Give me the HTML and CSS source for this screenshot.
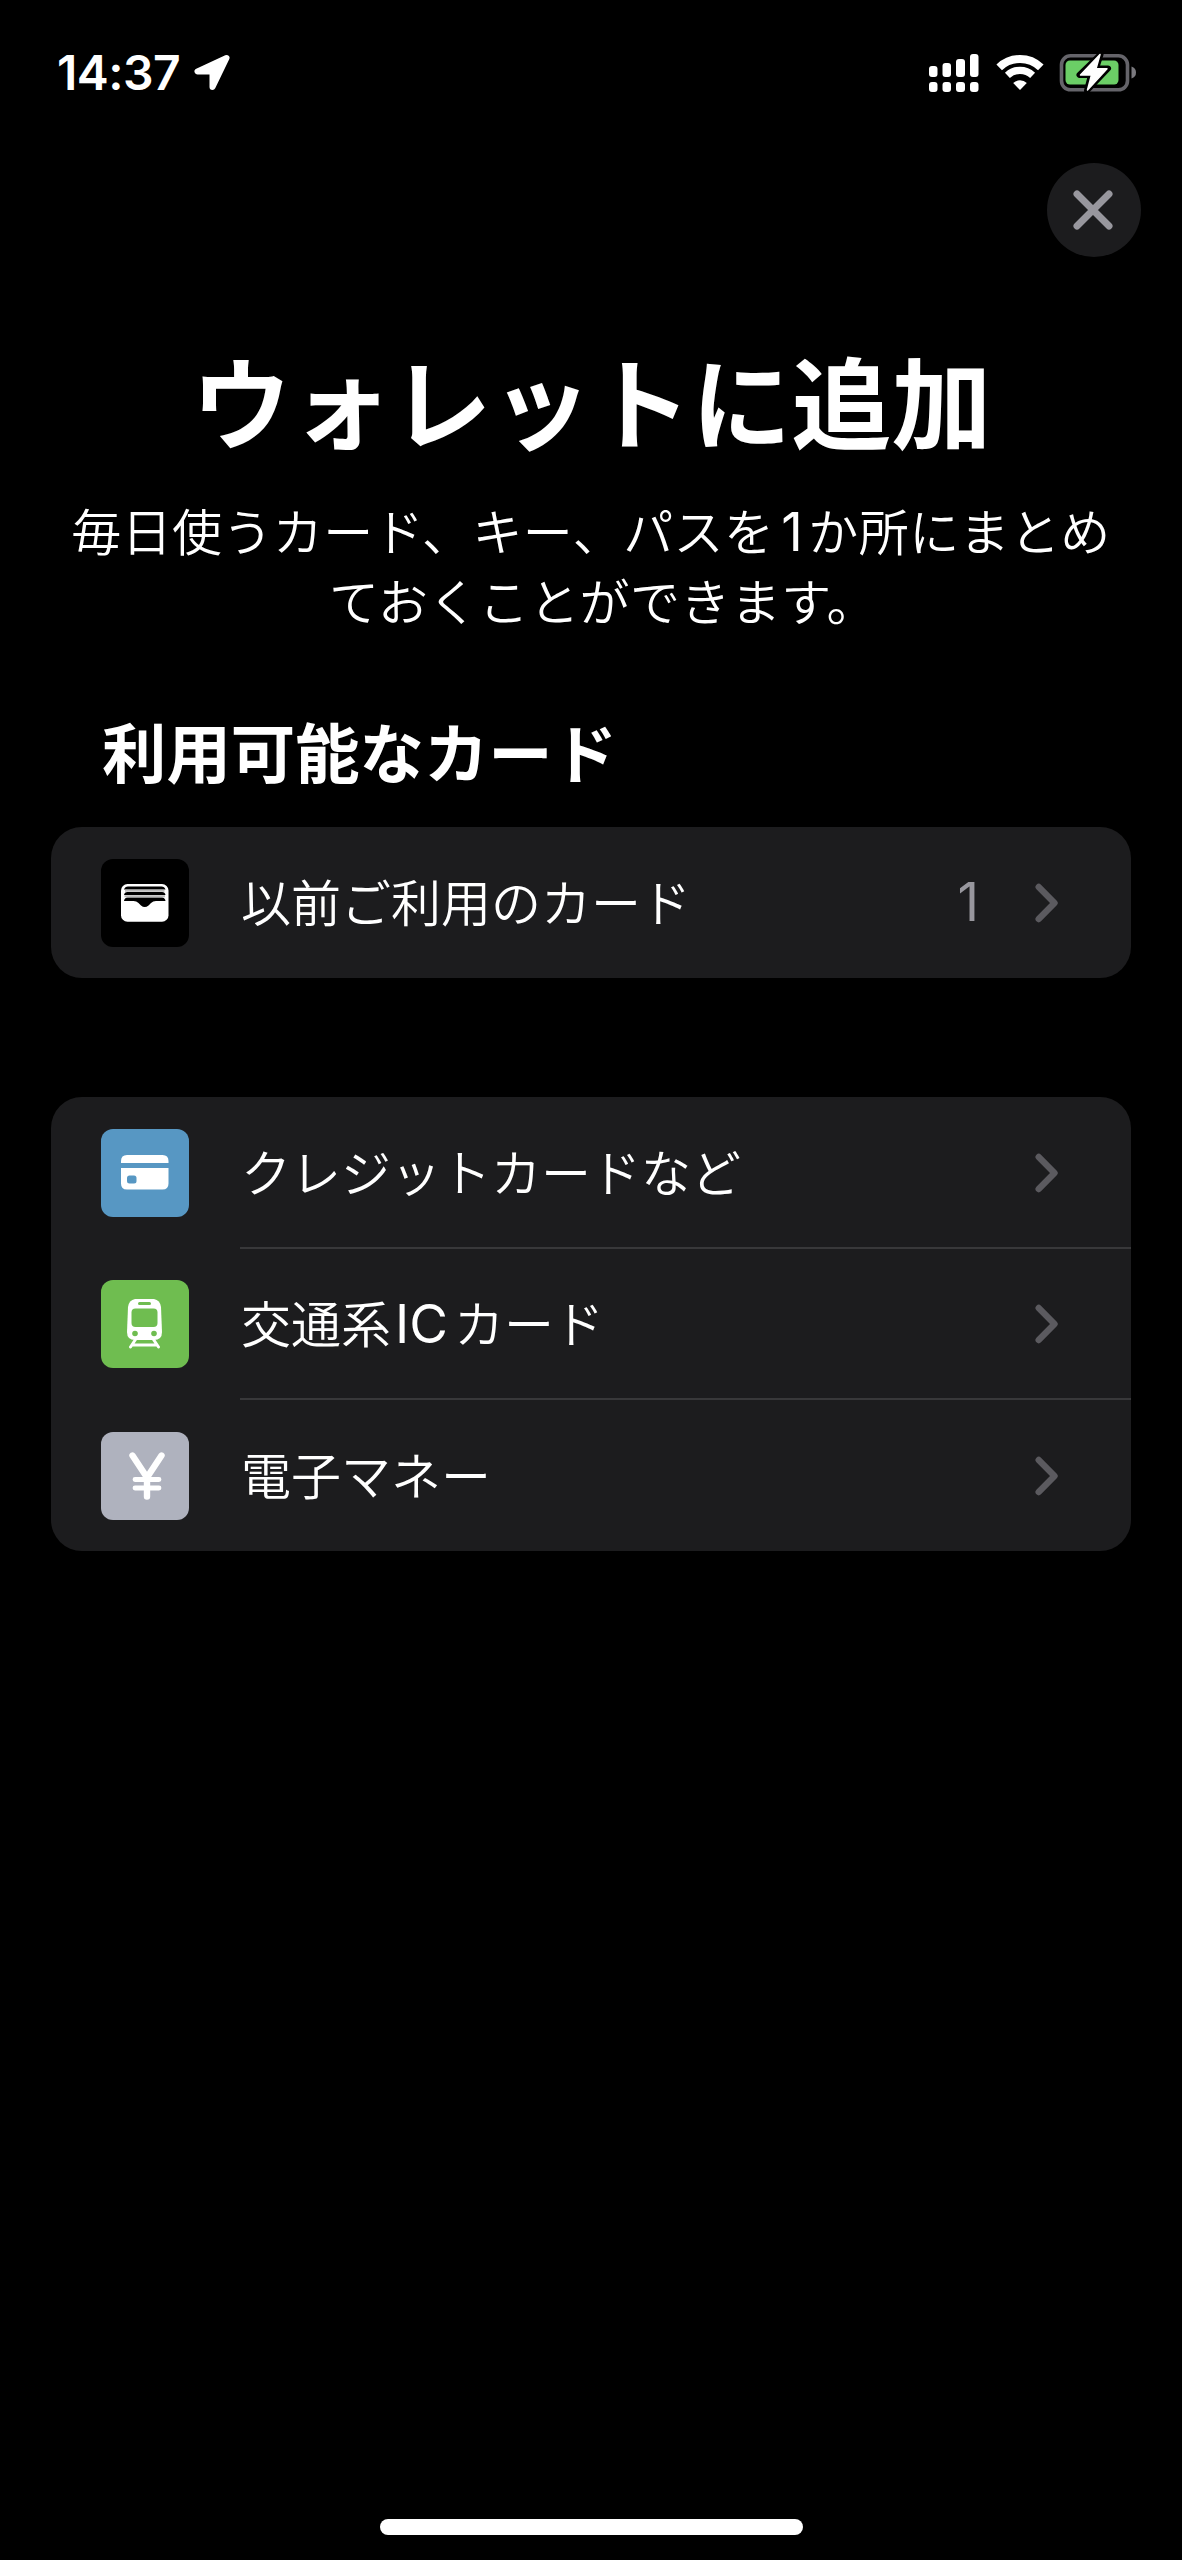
FILE: index.html
```html
<!DOCTYPE html>
<html lang="ja">
<head>
<meta charset="utf-8">
<title>ウォレットに追加</title>
<link rel="stylesheet" href="styles.css">
</head>
<body>
<div class="screen">
  <header class="status">
    <div class="status-left">
      <span class="time">14:37</span>
      <svg class="location" width="38" height="38" viewBox="0 0 38 38"><path d="M33.500 4 L4.500 17.500 H19.500 V33 Z" fill="#fff" stroke="#fff" stroke-width="6" stroke-linejoin="round"/></svg>
    </div>
    <div class="status-right">
      <svg width="52" height="40" viewBox="0 0 52 40" fill="#fff"><rect x="1" y="13" width="8.500" height="11" rx="3"/><rect x="14.500" y="10" width="8.500" height="14" rx="3"/><rect x="28" y="6" width="9" height="18" rx="3"/><rect x="42" y="1" width="8.500" height="23" rx="3"/><rect x="1" y="29" width="8.500" height="10" rx="3"/><rect x="14.500" y="29" width="8.500" height="10" rx="3"/><rect x="28" y="29" width="9" height="10" rx="3"/><rect x="42" y="29" width="8.500" height="10" rx="3"/></svg>
      <svg class="wifi" width="48" height="40" viewBox="0 0 48 40" fill="none" stroke="#fff"><path d="M3.200 14.300 A30 30 0 0 1 44.800 14.300" stroke-width="8"/><path d="M11.400 22.300 A18.500 18.500 0 0 1 36.600 22.300" stroke-width="7.200"/><path d="M24 37 L17.200 30 A10 10 0 0 1 30.800 30 Z" fill="#fff" stroke="none"/></svg>
      <svg width="80" height="40" viewBox="0 0 80 40"><rect x="2.500" y="2.800" width="66" height="34" rx="9" fill="none" stroke="#65646a" stroke-width="3.600"/><rect x="6.500" y="7.500" width="53" height="24" rx="4.500" fill="#6bce66"/><path d="M72.500 13.500 Q77 15 77 19.500 T72.500 25.500 Z" fill="#7a797e"/><path d="M41.500 1.500 L20.500 22 H32 L28 37.500 L49 15.500 H37 Z" fill="#fff" stroke="#000" stroke-width="6" stroke-linejoin="round"/><path d="M41 1.500 L21.500 22 H32.500 L28.500 37 L48 15.800 H37 Z" fill="#fff" stroke="#fff" stroke-width="1.500" stroke-linejoin="round"/></svg>
    </div>
  </header>

  <nav class="toolbar">
    <button class="close" aria-label="閉じる"><svg width="40" height="40" viewBox="0 0 40 40"><path d="M4 4 L36 36 M36 4 L4 36" stroke="#98979e" stroke-width="7" stroke-linecap="round"/></svg></button>
  </nav>

  <main>
    <h1 class="title">ウォレットに追加</h1>
    <p class="lead">毎日使うカード、キー、パスを<span class="num">1</span>か所にまとめ<br>ておくことができます<span class="stop">。</span></p>
    <h2 class="heading">利用可能なカード</h2>

    <section class="group">
      <div class="row">
        <span class="tile black"><svg width="48" height="38" viewBox="0 0 48 38"><rect width="47.500" height="37.700" rx="6.500" fill="#fff"/><path d="M3 5.600 Q4 2.500 7 2.500 H40.500 Q43.500 2.500 44.500 5.600 Z M3 11 Q3.500 8 6.500 8 H41 Q44 8 44.500 11 Z M3 17 Q3.500 13.500 6.500 13.500 H41 Q44 13.500 44.500 17 H35 Q32 17 30 19 L27.500 21.500 Q23.700 24.500 20 21.500 L17.500 19 Q15.500 17 12.500 17 Z" fill="#000"/><path d="M4 6.700 H43.500 M3.500 12.200 H44" stroke="#bbb" stroke-width="2"/></svg></span>
        <span class="label">以前ご利用のカード</span>
        <span class="count">1</span>
        <svg class="chevron" width="24" height="40" viewBox="0 0 24 40"><path d="M3.700 4 L19.500 20 L3.700 36"/></svg>
      </div>
    </section>

    <section class="group second">
      <div class="row">
        <span class="tile blue"><svg width="48" height="35" viewBox="0 0 48 35"><path d="M0 8 V6 Q0 0 6 0 H41.500 Q47.500 0 47.500 6 V8 Z M0 13 H47.500 V28.500 Q47.500 34.500 41.500 34.500 H6 Q0 34.500 0 28.500 Z" fill="#fff"/><rect x="6" y="20.500" width="9.500" height="8" rx="2.500" fill="#5797c3"/></svg></span>
        <span class="label">クレジットカードなど</span>
        <svg class="chevron" width="24" height="40" viewBox="0 0 24 40"><path d="M3.700 4 L19.500 20 L3.700 36"/></svg>
      </div>
      <div class="row">
        <span class="tile green"><svg width="36" height="50" viewBox="0 0 36 50"><path d="M8 0 H27 Q33 1 34 8 L35 33 Q35 41 27 41 H8 Q0 41 0 33 L1 8 Q2 1 8 0 Z" fill="#fff"/><rect x="11" y="3" width="13" height="3" rx="1.500" fill="#6fbd50"/><rect x="4.500" y="9.500" width="26" height="18.500" rx="4" fill="#6fbd50"/><circle cx="8" cy="34.500" r="2.800" fill="#6fbd50"/><circle cx="27" cy="34.500" r="2.800" fill="#6fbd50"/><path d="M9.500 39 L3.500 48 M25.500 39 L31.500 48 M6 46 H29" fill="none" stroke="#fff" stroke-width="3" stroke-linecap="round"/></svg></span>
        <span class="label">交通系<span class="latin">IC</span>カード</span>
        <svg class="chevron" width="24" height="40" viewBox="0 0 24 40"><path d="M3.700 4 L19.500 20 L3.700 36"/></svg>
      </div>
      <div class="row">
        <span class="tile gray"><svg class="yen" width="36" height="48" viewBox="0 0 36 48" fill="none" stroke="#fff" stroke-linecap="round" stroke-linejoin="round"><path d="M3.500 3.500 L18 25.500 L32.500 3.500 M18 25.500 V44.500" stroke-width="6.400"/><path d="M6 27.500 H30 M6 36 H30" stroke-width="4.800"/></svg></span>
        <span class="label">電子マネー</span>
        <svg class="chevron" width="24" height="40" viewBox="0 0 24 40"><path d="M3.700 4 L19.500 20 L3.700 36"/></svg>
      </div>
    </section>
  </main>

  <footer class="home"><span class="home-bar"></span></footer>
</div>
</body>
</html>
```
FILE: styles.css
```css
* { box-sizing: border-box; }
body {
  margin: 0;
  background: #000;
  color: #fff;
  font-family: "Noto Sans CJK JP", sans-serif;
}
.screen {
  width: 1182px;
  height: 2560px;
  display: flex;
  flex-direction: column;
  background: #000;
}
svg { display: block; flex: none; }
.status {
  height: 146px;
  padding: 0 43px 0 57px;
  display: flex;
  align-items: center;
  justify-content: space-between;
}
.status-left, .status-right { display: flex; align-items: center; }
.time {
  width: 136px;
  font: 600 48px/60px Inter, sans-serif;
  letter-spacing: -0.5px;
}
.toolbar {
  height: 110px;
  padding: 17px 41px 0 0;
  display: flex;
  justify-content: flex-end;
}
.close {
  width: 94px;
  height: 94px;
  padding: 0 2px 0 0;
  border: 0;
  border-radius: 50%;
  background: #1c1c1e;
  display: flex;
  align-items: center;
  justify-content: center;
}
.wifi { margin: 0 15px 0 16px; }
main { flex: 1; }
.title {
  margin: 71px 0 0;
  height: 144px;
  font-size: 100px;
  line-height: 144px;
  font-weight: 700;
  text-align: center;
  text-indent: 1px;
}
.lead {
  margin: 24px 0 0;
  height: 139px;
  font-size: 50px;
  line-height: 69.500px;
  font-weight: 350;
  letter-spacing: 0.400px;
  text-align: center;
  white-space: nowrap;
}
.num, .latin, .count {
  font-family: Inter, sans-serif;
  font-size: 53px;
  font-weight: 400;
  line-height: 1;
}
.num { margin: 0 5px 0 7px; }
.latin { margin: 0 6px 0 4px; }
.stop { margin-right: -24px; }
.heading {
  margin: 71px 0 0 102px;
  font-size: 64.400px;
  line-height: 90px;
  font-weight: 700;
}
.group {
  margin: 32px 51px 0;
  border-radius: 31px;
  background: #1c1c1e;
}
.second { margin-top: 119px; }
.row {
  height: 151.330px;
  padding: 0 72px 0 50px;
  display: flex;
  align-items: center;
}
.row:not(:last-child) {
  background: linear-gradient(#38383a, #38383a) no-repeat 189px 100% / 100% 2px;
}
.group:not(.second) .row { background: none; }
.tile {
  width: 88px;
  height: 88px;
  flex: none;
  margin-right: 52px;
  border-radius: 12px;
  display: flex;
  align-items: center;
  justify-content: center;
}
.tile.black { background: #000; }
.tile.blue { background: #5797c3; }
.tile.green { background: #6fbd50; }
.tile.gray { background: #afb2be; }
.yen { margin-left: 3px; }
.label {
  flex: 1;
  padding-bottom: 6px;
  font-size: 50px;
  line-height: 70px;
  font-weight: 350;
  white-space: nowrap;
}
.count {
  margin-right: 56px;
  color: #98979e;
}
.chevron path {
  fill: none;
  stroke: #5b5a5f;
  stroke-width: 6.400px;
  stroke-linecap: round;
  stroke-linejoin: round;
}
.home {
  height: 41px;
  display: flex;
  justify-content: center;
}
.home-bar {
  width: 423px;
  height: 16px;
  border-radius: 8px;
  background: #fff;
}
```
